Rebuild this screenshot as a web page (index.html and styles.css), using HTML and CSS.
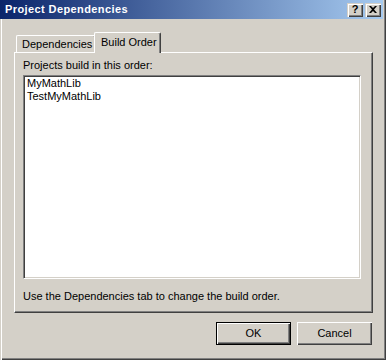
FILE: index.html
```html
<!DOCTYPE html>
<html>
<head>
<meta charset="utf-8">
<link rel="stylesheet" href="styles.css">
</head>
<body>
<div class="window">
  <div class="titlebar">
    <span class="title">Project Dependencies</span>
    <div class="caption-buttons">
      <div class="cap help">?</div>
      <div class="cap close">
        <svg width="8" height="7" viewBox="0 0 8 7"><path d="M0 0H2L4 2L6 0H8L5 3.5L8 7H6L4 5L2 7H0L3 3.5Z" fill="#000"/></svg>
      </div>
    </div>
  </div>
  <div class="client">
    <div class="tabs">
      <div class="tab dep">Dependencies</div>
      <div class="tab active">Build Order</div>
    </div>
    <div class="panel">
      <div class="label">Projects build in this order:</div>
      <div class="list">
        <div class="item">MyMathLib</div>
        <div class="item">TestMyMathLib</div>
      </div>
      <div class="hint">Use the Dependencies tab to change the build order.</div>
    </div>
    <div class="buttons">
      <div class="btn default"><span>OK</span></div>
      <div class="btn">Cancel</div>
    </div>
  </div>
</div>
</body>
</html>
```

FILE: styles.css
```css
* { box-sizing: border-box; }
html, body { margin: 0; padding: 0; }
body {
  background: #d4d0c8;
  font-family: "Liberation Sans", Arial, sans-serif;
  font-size: 11px;
  line-height: 13px;
  color: #000;
}
.window {
  width: 386px;
  height: 360px;
  display: flex;
  flex-direction: column;
  background: #d4d0c8;
  padding: 0 3px 3px 0;
  box-shadow: inset 1px 0 #d4d0c8, inset 2px 0 #fff, inset -1px -1px #404040, inset -2px -2px #808080;
}
.titlebar {
  height: 19px;
  flex: none;
  display: flex;
  align-items: center;
  justify-content: space-between;
  padding: 0 2px 0 5px;
  background: linear-gradient(to right, #0a246a, #a6caf0);
  color: #fff;
  font-weight: bold;
}
.title { line-height: 13px; letter-spacing: 0.4px; }
.caption-buttons { display: flex; gap: 2px; }
.cap {
  width: 16px;
  height: 14px;
  background: #d4d0c8;
  box-shadow: inset 1px 1px #d4d0c8, inset 2px 2px #fff, inset -1px -1px #404040, inset -2px -2px #808080;
  display: flex;
  align-items: center;
  justify-content: center;
  color: #000;
  font-weight: bold;
  font-size: 11px;
  line-height: 11px;
}
.cap svg { display: block; margin-left: -1px; }
.client {
  flex: 1;
  padding: 13px 10px 0 14px;
  display: flex;
  flex-direction: column;
}
.tabs {
  height: 20px;
  display: flex;
  align-items: flex-end;
  padding-left: 2px;
  position: relative;
  z-index: 2;
}
.tab {
  height: 17px;
  background: #d4d0c8;
  border-top: 1px solid #fff;
  border-left: 1px solid #fff;
  border-right: 1px solid #404040;
  box-shadow: inset -1px 0 #808080;
  border-radius: 2px 2px 0 0;
  white-space: nowrap;
}
.tab.dep {
  width: 80px;
  padding: 2px 0 0 5px;
}
.tab.active {
  width: 67px;
  height: 21px;
  margin-left: -2px;
  margin-bottom: -1px;
  padding: 3px 0 0 6px;
}
.panel {
  height: 261px;
  flex: none;
  border-top: 1px solid #fff;
  border-left: 1px solid #fff;
  border-right: 1px solid #404040;
  border-bottom: 1px solid #404040;
  box-shadow: inset -1px -1px #808080;
  padding: 6px 0 0 8px;
  position: relative;
  z-index: 1;
}
.list {
  width: 338px;
  height: 204px;
  margin-top: 3px;
  background: #fff;
  border-top: 1px solid #808080;
  border-left: 1px solid #808080;
  border-right: 1px solid #fff;
  border-bottom: 1px solid #fff;
  box-shadow: inset 1px 1px #404040, inset -1px -1px #d4d0c8;
  padding: 1px 0 0 3px;
}
.hint { margin-top: 11px; }
.buttons {
  display: flex;
  justify-content: flex-end;
  gap: 6px;
  margin-top: 9px;
  padding-right: 1px;
}
.btn {
  width: 75px;
  height: 23px;
  display: flex;
  align-items: center;
  justify-content: center;
  background: #d4d0c8;
  box-shadow: inset 1px 1px #fff, inset -1px -1px #404040, inset -2px -2px #808080;
}
.btn.default {
  border: 1px solid #000;
}
```
